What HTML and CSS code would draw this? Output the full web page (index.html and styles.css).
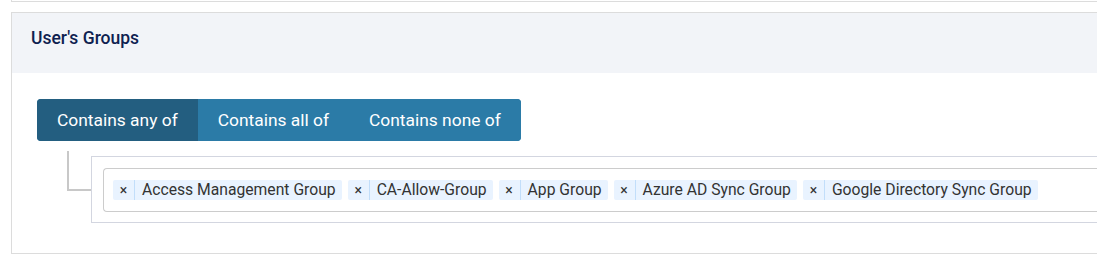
FILE: index.html
```html
<!DOCTYPE html>
<html>
<head>
<meta charset="utf-8">
<link rel="stylesheet" href="styles.css">
</head>
<body>
<div class="topbox"></div>
<section class="panel">
  <header class="panel-header">User's Groups</header>
  <div class="panel-body">
    <div class="btn-group">
      <button class="btn active">Contains any of</button>
      <button class="btn">Contains all of</button>
      <button class="btn">Contains none of</button>
    </div>
    <div class="cond-row">
      <div class="connector"></div>
      <div class="cond-box">
        <div class="select">
          <span class="tag"><span class="tag-x">×</span><span class="tag-label">Access Management Group</span></span>
          <span class="tag"><span class="tag-x">×</span><span class="tag-label">CA-Allow-Group</span></span>
          <span class="tag"><span class="tag-x">×</span><span class="tag-label">App Group</span></span>
          <span class="tag"><span class="tag-x">×</span><span class="tag-label">Azure AD Sync Group</span></span>
          <span class="tag"><span class="tag-x">×</span><span class="tag-label">Google Directory Sync Group</span></span>
        </div>
      </div>
    </div>
  </div>
</section>
</body>
</html>
```

FILE: styles.css
```css
html, body {
  margin: 0;
  padding: 0;
  background: #ffffff;
  overflow: hidden;
}
body {
  padding-left: 11px;
  font-family: Roboto, "Liberation Sans", sans-serif;
  width: 1200px;
}
.topbox {
  height: 1px;
  border-left: 1px solid #dcdcdc;
  border-bottom: 1px solid #dcdcdc;
}
.panel {
  margin-top: 10px;
  border: 1px solid #dcdcdc;
  border-right: none;
}
.panel-header {
  background: #f2f4f8;
  padding: 15px 19px 25px;
  line-height: 20px;
  font-size: 17.5px;
  font-weight: 500;
  color: #0e2150;
}
.panel-body {
  padding: 26px 25px 30px;
}
.btn-group {
  display: inline-flex;
  border-radius: 4px;
  overflow: hidden;
  background: #2b7ba7;
}
.btn {
  border: none;
  margin: 0;
  height: 42px;
  padding: 0 20px;
  font-family: Roboto, "Liberation Sans", sans-serif;
  font-size: 17.4px;
  color: #ffffff;
  background: #2b7ba7;
}
.btn.active {
  background: #235e80;
}
.cond-row {
  display: flex;
  margin-top: 15px;
  padding-left: 30px;
}
.connector {
  width: 22px;
  height: 38px;
  margin-top: -5px;
  border-left: 2px solid #c8c8c8;
  border-bottom: 2px solid #c8c8c8;
  flex: none;
}
.cond-box {
  flex: 1;
  border: 1px solid #d3d6e0;
  border-right: none;
  padding: 11px 0 10px 11px;
}
.select {
  display: flex;
  gap: 6px;
  border: 1px solid #cccccc;
  border-right: none;
  border-radius: 4px 0 0 4px;
  padding: 11px 9px;
}
.tag {
  display: flex;
  align-items: center;
  height: 20px;
  background: #e9f3ff;
  border-radius: 2px;
  font-size: 15.7px;
  color: #333333;
}
.tag-x {
  width: 21px;
  text-align: center;
  font-size: 14px;
  color: #333;
  border-right: 1px solid #c2defa;
  line-height: 20px;
}
.tag-label {
  padding: 0 6px 0 7px;
  line-height: 20px;
}
```
